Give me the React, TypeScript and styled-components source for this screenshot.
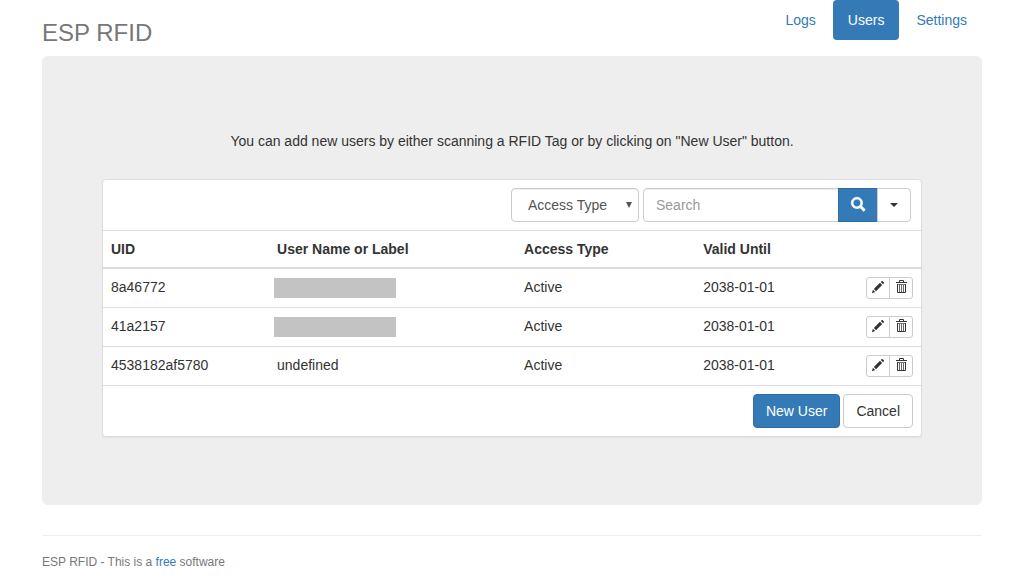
import React from "react";
import styled, { createGlobalStyle, css } from "styled-components";

const GlobalStyle = createGlobalStyle`
  *, *::before, *::after { box-sizing: border-box; }
  body {
    margin: 0;
    background: #fff;
    color: #333;
    font: 14px/20px "Liberation Sans", Arial, sans-serif;
  }
  button, input, select { font: inherit; margin: 0; }
  a { color: #337ab7; text-decoration: none; }
`;

const Container = styled.div`
  max-width: 970px;
  margin: 0 auto;
  padding: 0 15px;
`;

const Header = styled.header`
  display: flex;
  justify-content: space-between;
  align-items: flex-start;
  padding-bottom: 10px;
`;

const Brand = styled.h3`
  margin: 20px 0 0;
  font-size: 24px;
  line-height: 26px;
  font-weight: 400;
  color: #777;
`;

const Nav = styled.nav`
  display: flex;
  gap: 2px;
`;

const NavLink = styled.a<{ $active?: boolean }>`
  padding: 10px 15px;
  border-radius: 4px;
  ${(p) => p.$active && css`
    color: #fff;
    background: #337ab7;
  `}
`;

const Jumbotron = styled.main`
  padding: 75px 60px 68px;
  border-radius: 6px;
  background: #eee;
`;

const Lead = styled.p`
  margin: 0 0 28px;
  text-align: center;
`;

const Panel = styled.section`
  border: 1px solid #ddd;
  border-radius: 4px;
  background: #fff;
  box-shadow: 0 1px 1px rgba(0, 0, 0, 0.05);
`;

const Toolbar = styled.form`
  display: flex;
  justify-content: flex-end;
  gap: 4px;
  padding: 8px 10px;
  border-bottom: 1px solid #ddd;
`;

const field = css`
  height: 34px;
  border: 1px solid #ccc;
  background: #fff;
  color: #555;
  box-shadow: inset 0 1px 1px rgba(0, 0, 0, 0.075);
`;

const SelectWrap = styled.label`
  display: grid;
  align-items: center;
  width: 128px;
  > * { grid-area: 1 / 1; }
  > svg {
    justify-self: end;
    margin-right: 6px;
    pointer-events: none;
  }
`;

const Select = styled.select`
  ${field}
  width: 100%;
  padding: 6px 16px;
  border-radius: 4px;
  appearance: none;
`;

const SearchGroup = styled.div`
  display: flex;
`;

const SearchInput = styled.input`
  ${field}
  width: 196px;
  padding: 6px 12px;
  border-radius: 4px 0 0 4px;
  &::placeholder { color: #999; opacity: 1; }
`;

const Button = styled.button<{ $primary?: boolean }>`
  height: 34px;
  padding: 6px 12px;
  border: 1px solid ${(p) => (p.$primary ? "#2e6da4" : "#ccc")};
  border-radius: 4px;
  background: ${(p) => (p.$primary ? "#337ab7" : "#fff")};
  color: ${(p) => (p.$primary ? "#fff" : "#333")};
`;

const GroupButton = styled(Button)`
  display: flex;
  align-items: center;
  margin-left: -1px;
  border-radius: 0;
  &:last-child { border-radius: 0 4px 4px 0; }
`;

const SearchButton = styled(GroupButton)`
  padding: 0 12px 2px;
  svg { display: block; overflow: visible; }
`;

const Caret = styled.span`
  border: 4px solid transparent;
  border-top-color: #333;
  border-bottom: 0;
`;

const Table = styled.table`
  width: 100%;
  table-layout: fixed;
  border-spacing: 0;
`;

const Column = styled.col<{ $width?: string }>`
  width: ${(p) => p.$width ?? "auto"};
`;

const HeadCell = styled.th`
  padding: 8px;
  border-bottom: 2px solid #ddd;
  text-align: left;
  font-weight: 700;
`;

const Cell = styled.td`
  height: 39px;
  padding: 8px;
  border-bottom: 1px solid #ddd;
  vertical-align: top;
`;

const Redacted = styled.span`
  display: block;
  width: 122px;
  height: 20px;
  margin: 1px 0 0 -3px;
  background: #c3c3c3;
`;

const RowActions = styled.div`
  display: flex;
  justify-content: flex-end;
`;

const IconButton = styled.button`
  display: flex;
  align-items: center;
  justify-content: center;
  width: 24px;
  height: 22px;
  padding: 0 0 2px;
  border: 1px solid #ccc;
  border-radius: 3px 0 0 3px;
  background: #fff;
  color: #333;
  svg { display: block; overflow: visible; }
  & + & {
    margin-left: -1px;
    border-radius: 0 3px 3px 0;
  }
`;

const PanelFooter = styled.div`
  display: flex;
  justify-content: flex-end;
  gap: 3px;
  padding: 8px;
`;

const Footer = styled.footer`
  margin-top: 30px;
  padding: 16px 0;
  border-top: 1px solid #eee;
  font-size: 12px;
  color: #777;
`;

const SearchIcon = () => (
  <svg width="14" height="14" viewBox="0 0 1200 1200" fill="currentColor" aria-hidden="true">
    <path
      transform="matrix(1 0 0 -1 0 1200)"
      stroke="currentColor"
      strokeWidth="60"
      d="M507 1177q98 0 187.5 -38.5t154.5 -103.5t103.5 -154.5t38.5 -187.5q0 -141 -78 -262l300 -299q8 -8 8 -18.5t-8 -18.5l-109 -108q-7 -8 -17.5 -8t-18.5 8l-300 299q-119 -77 -261 -77q-98 0 -188 38.5t-154.5 103t-103 154.5t-38.5 188t38.5 187.5t103 154.5t154.5 103.5t188 38.5zM506.5 1023q-89.5 0 -165.5 -44t-120 -120.5t-44 -166t44 -165.5t120 -120t165.5 -44t166 44t120.5 120t44 165.5t-44 166t-120.5 120.5t-166 44z"
    />
  </svg>
);

const PencilIcon = () => (
  <svg width="12" height="12" viewBox="0 0 1200 1200" fill="currentColor" aria-hidden="true">
    <path
      transform="matrix(1 0 0 -1 0 1200)"
      d="M1011 1210q19 0 33 -13l153 -153q13 -14 13 -33t-13 -33l-99 -92l-214 214l95 96q13 14 32 14zM1013 800l-615 -614l-214 214l614 614zM317 96l-333 -112l110 335z"
    />
  </svg>
);

const TrashIcon = () => (
  <svg width="12" height="12" viewBox="0 0 12 12" fill="none" stroke="currentColor" aria-hidden="true">
    <path d="M4.500 1V-.5H8.500V1" />
    <path d="M1 1.500H12" />
    <path d="M2.500 3V11.500H10.500V3" />
    <path d="M2 3.500H11" strokeOpacity="0.7" />
    <path d="M4.500 4V11M6.500 4V11M8.500 4V11" strokeOpacity="0.75" />
  </svg>
);

const SelectArrow = () => (
  <svg width="8" height="8" viewBox="0 0 8 8" fill="#555" aria-hidden="true">
    <path d="M1 1h6L4 7z" />
  </svg>
);

interface User {
  uid: string;
  name?: string;
  access: string;
  validUntil: string;
}

const users: User[] = [
  { uid: "8a46772", access: "Active", validUntil: "2038-01-01" },
  { uid: "41a2157", access: "Active", validUntil: "2038-01-01" },
  { uid: "4538182af5780", name: "undefined", access: "Active", validUntil: "2038-01-01" },
];

export default function App() {
  return (
    <>
      <GlobalStyle />
      <Container>
        <Header>
          <Brand>ESP RFID</Brand>
          <Nav>
            <NavLink href="#logs">Logs</NavLink>
            <NavLink href="#users" $active aria-current="page">Users</NavLink>
            <NavLink href="#settings">Settings</NavLink>
          </Nav>
        </Header>

        <Jumbotron>
          <Lead>
            You can add new users by either scanning a RFID Tag or by clicking on "New User" button.
          </Lead>
          <Panel>
            <Toolbar onSubmit={(e) => e.preventDefault()}>
              <SelectWrap>
                <Select aria-label="Access Type">
                  <option>Access Type</option>
                </Select>
                <SelectArrow />
              </SelectWrap>
              <SearchGroup>
                <SearchInput type="text" placeholder="Search" aria-label="Search" />
                <SearchButton type="submit" $primary aria-label="Run search">
                  <SearchIcon />
                </SearchButton>
                <GroupButton type="button" aria-label="Search options">
                  <Caret />
                </GroupButton>
              </SearchGroup>
            </Toolbar>
            <Table>
              <colgroup>
                <Column $width="20.3%" />
                <Column $width="30.2%" />
                <Column $width="21.9%" />
                <Column />
                <Column $width="64px" />
              </colgroup>
              <thead>
                <tr>
                  <HeadCell scope="col">UID</HeadCell>
                  <HeadCell scope="col">User Name or Label</HeadCell>
                  <HeadCell scope="col">Access Type</HeadCell>
                  <HeadCell scope="col">Valid Until</HeadCell>
                  <HeadCell as="td" />
                </tr>
              </thead>
              <tbody>
                {users.map((user) => (
                  <tr key={user.uid}>
                    <Cell>{user.uid}</Cell>
                    <Cell>{user.name ?? <Redacted />}</Cell>
                    <Cell>{user.access}</Cell>
                    <Cell>{user.validUntil}</Cell>
                    <Cell>
                      <RowActions>
                        <IconButton type="button" aria-label={`Edit ${user.uid}`}>
                          <PencilIcon />
                        </IconButton>
                        <IconButton type="button" aria-label={`Delete ${user.uid}`}>
                          <TrashIcon />
                        </IconButton>
                      </RowActions>
                    </Cell>
                  </tr>
                ))}
              </tbody>
            </Table>
            <PanelFooter>
              <Button type="button" $primary>New User</Button>
              <Button type="button">Cancel</Button>
            </PanelFooter>
          </Panel>
        </Jumbotron>

        <Footer>
          ESP RFID - This is a <a href="#free">free</a> software
        </Footer>
      </Container>
    </>
  );
}
